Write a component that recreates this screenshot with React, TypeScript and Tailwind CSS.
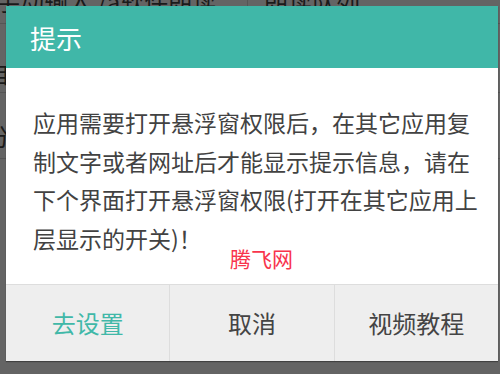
import React from "react";

const cjk = { fontFamily: '"Noto Sans CJK SC", "Noto Sans", sans-serif' };

export default function App() {
  return (
    <div className="relative w-[500px] h-[374px] overflow-hidden bg-[#646464]" style={cjk}>
      {/* background app (dimmed) */}
      <div className="flex flex-col text-[#1a1a1a]">
        <div className="flex h-[38px] border-b border-[#555] -mt-[14px] pt-0">
          <div className="w-[252px] border-r border-[#555] text-[24px] leading-[30px] whitespace-nowrap overflow-hidden -ml-[4px]">手动输入 /a软件朗读</div>
          <div className="pl-[16px] text-[24px] leading-[30px] whitespace-nowrap">朗读队列</div>
        </div>
        <div className="h-[69px] border-b border-[#555] text-[24px] leading-[69px] -ml-[14px] pt-[14px]">自</div>
        <div className="h-[66px] border-b border-[#555] text-[24px] leading-[66px] -ml-[14px] pt-[10px]">分</div>
      </div>

      {/* dialog */}
      <div className="absolute left-[6px] top-[6px] w-[492px] h-[355px] flex flex-col bg-white shadow-[0_1px_1px_rgba(0,0,0,0.35)]">
        <div className="h-[62px] bg-[#40b7a8] flex items-center pl-[24px] text-white text-[26px]">提示</div>
        <div className="h-[216px] pl-[27px] pt-[35px] text-[23px] leading-[38.5px] text-[#424242] whitespace-nowrap">
          应用需要打开悬浮窗权限后，在其它应用复
          <br />
          制文字或者网址后才能显示提示信息，请在
          <br />
          下个界面打开悬浮窗权限(打开在其它应用上
          <br />
          层显示的开关)！
        </div>
        <div className="flex-1 flex bg-[#eeeeee] border-t border-[#dddddd] text-[24px]">
          <div className="flex-1 flex items-center justify-center text-[#40b8a8] border-r border-[#dddddd]">去设置</div>
          <div className="flex-1 flex items-center justify-center text-[#444] border-r border-[#dddddd]">取消</div>
          <div className="flex-1 flex items-center justify-center text-[#444]">视频教程</div>
        </div>
      </div>

      {/* watermark */}
      <div className="absolute left-[230px] top-[244px] text-[21px] leading-[28px] text-[#f8344c]">腾飞网</div>
    </div>
  );
}
